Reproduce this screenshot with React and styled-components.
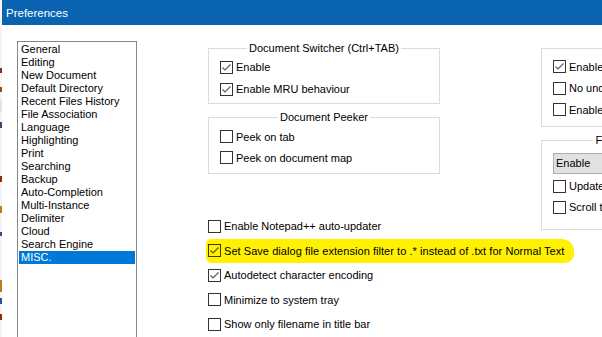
import React from "react";
import styled, { createGlobalStyle } from "styled-components";

const GlobalStyle = createGlobalStyle`
  html, body {
    margin: 0;
    padding: 0;
    background: #fff;
    overflow: hidden;
  }

  body {
    font-family: "Liberation Sans", Arial, sans-serif;
    font-size: 11px;
    color: #000;
  }
`;

const Screen = styled.div`
  display: flex;
  width: 602px;
  height: 337px;
  overflow: hidden;
`;

/* the app window behind the dialog, barely visible on the left */
const BackdropEdge = styled.div`
  flex: none;
  width: 2px;
  background: linear-gradient(
    to bottom,
    #f4f4f4 0 68px,
    #8a2a1a 68px 73px,
    #f4f4f4 73px 87px,
    #a5471c 87px 92px,
    #f4f4f4 92px 100px,
    #dfe2ee 100px 112px,
    #f4f4f4 112px 122px,
    #3a4a6a 122px 128px,
    #f4f4f4 128px 176px,
    #8a2a1a 176px 182px,
    #f4f4f4 182px 206px,
    #c27a1a 206px 213px,
    #f4f4f4 213px 232px,
    #33508a 232px 236px,
    #f4f4f4 236px 280px,
    #c27a1a 280px 292px,
    #f4f4f4 292px 298px,
    #33508a 298px 304px,
    #f4f4f4 304px 314px,
    #8a2a1a 314px 320px,
    #f4f4f4 320px
  );
`;

const Window = styled.div`
  flex: 1;
  min-width: 0;
  display: flex;
  flex-direction: column;
  overflow: hidden;
  background: #fff;
`;

const TitleBar = styled.div`
  flex: none;
  height: 25px;
  display: flex;
  align-items: center;
  padding-left: 4px;
  background: #0a63b0;
  color: #fff;
  font-size: 11.5px;
`;

const Body = styled.div`
  flex: 1;
  min-height: 0;
  display: flex;
  align-items: flex-start;
  padding: 16px 0 0 15px;
`;

const ListBox = styled.ul`
  flex: none;
  box-sizing: border-box;
  width: 120px;
  height: 320px;
  margin: 0;
  padding: 1px;
  list-style: none;
  border: 1px solid #828790;
`;

const ListItem = styled.li`
  height: 13px;
  line-height: 13px;
  padding-left: 2px;
  white-space: nowrap;
  background: ${(p) => (p.$selected ? "#0078d7" : "transparent")};
  color: ${(p) => (p.$selected ? "#fff" : "#000")};
`;

const Panel = styled.div`
  display: grid;
  grid-template-columns: 232px 236px;
  column-gap: 101px;
  align-items: start;
  margin-left: 71px;
`;

const Column = styled.div`
  display: flex;
  flex-direction: column;
  padding-top: 1px;
`;

const Group = styled.fieldset`
  margin: ${(p) => (p.$first ? "0" : "7px 0 0")};
  padding: ${(p) => p.$pad || "1px 11px 3px"};
  min-width: 0;
  border: 1px solid #dcdcdc;
`;

const Legend = styled.legend`
  margin: 0 auto;
  padding: 0 2px;
  line-height: 13px;
  white-space: nowrap;
`;

const CheckRow = styled.label`
  display: ${(p) => (p.$highlight ? "inline-flex" : "flex")};
  align-items: center;
  align-self: flex-start;
  height: ${(p) => p.$h || 22}px;
  white-space: nowrap;
  ${(p) =>
    p.$highlight &&
    `
    margin-left: -2px;
    padding: 0 10px 0 2px;
    letter-spacing: 0.05px;
    background: #fff100;
    border-radius: 5px 12px 9px 6px;
  `}
`;

const Box = styled.span`
  flex: none;
  box-sizing: border-box;
  width: 13px;
  height: 13px;
  margin-right: 3px;
  border: 1px solid ${(p) => (p.$onMark ? "#3d3b00" : "#333")};
  background: ${(p) => (p.$onMark ? "transparent" : "#fff")};
  display: flex;

  svg {
    display: block;
  }
`;

const BottomList = styled.div`
  display: flex;
  flex-direction: column;
  margin-top: 40px;
`;

const Dropdown = styled.div`
  box-sizing: border-box;
  display: flex;
  align-items: center;
  justify-content: space-between;
  width: 200px;
  height: 21px;
  padding: 0 6px 0 2px;
  margin-bottom: 2px;
  background: #e1e1e1;
  border: 1px solid #adadad;
`;

const Check = ({ checked, onMark }) => (
  <Box $onMark={onMark}>
    {checked && (
      <svg width="11" height="11" viewBox="0 0 11 11">
        <polyline
          points="1.5,5.5 4,8 9.5,2.5"
          fill="none"
          stroke={onMark ? "#5a5700" : "#5e5e5e"}
          strokeWidth="1.2"
        />
      </svg>
    )}
  </Box>
);

const Option = ({ checked, h, highlight, children }) => (
  <CheckRow $h={h} $highlight={highlight}>
    <Check checked={checked} onMark={highlight} />
    {children}
  </CheckRow>
);

const categories = [
  "General",
  "Editing",
  "New Document",
  "Default Directory",
  "Recent Files History",
  "File Association",
  "Language",
  "Highlighting",
  "Print",
  "Searching",
  "Backup",
  "Auto-Completion",
  "Multi-Instance",
  "Delimiter",
  "Cloud",
  "Search Engine",
  "MISC.",
];

const App = () => {
  return (
    <Screen>
      <GlobalStyle />
      <BackdropEdge />
      <Window>
        <TitleBar>Preferences</TitleBar>
        <Body>
          <ListBox>
            {categories.map((c) => (
              <ListItem key={c} $selected={c === "MISC."}>
                {c}
              </ListItem>
            ))}
          </ListBox>

          <Panel>
            <Column>
              <Group $first>
                <Legend>Document Switcher (Ctrl+TAB)</Legend>
                <Option checked>Enable</Option>
                <Option checked>Enable MRU behaviour</Option>
              </Group>
              <Group $pad="2px 11px 5px">
                <Legend>Document Peeker</Legend>
                <Option h={21}>Peek on tab</Option>
                <Option h={21}>Peek on document map</Option>
              </Group>

              <BottomList>
                <Option h={24.5}>Enable Notepad++ auto-updater</Option>
                <Option h={24.5} checked highlight>
                  Set Save dialog file extension filter to .* instead of .txt
                  for Normal Text
                </Option>
                <Option h={24.5} checked>
                  Autodetect character encoding
                </Option>
                <Option h={24.5}>Minimize to system tray</Option>
                <Option h={24.5}>Show only filename in title bar</Option>
              </BottomList>
            </Column>

            <Column>
              <Group $first $pad="1px 11px 5px">
                <Legend>Clickable Link Settings</Legend>
                <Option h={21.5} checked>
                  Enable
                </Option>
                <Option h={21.5}>No underline</Option>
                <Option h={21.5}>Enable fullbox mode</Option>
              </Group>
              <Group $pad="6px 11px 11px">
                <Legend>File Status Auto-Detection</Legend>
                <Dropdown>
                  <span>Enable</span>
                  <svg width="8" height="5" viewBox="0 0 8 5">
                    <polyline
                      points="0.5,0.5 4,4 7.5,0.5"
                      fill="none"
                      stroke="#333"
                    />
                  </svg>
                </Dropdown>
                <Option h={21}>Update silently</Option>
                <Option h={21}>Scroll to the last line after update</Option>
              </Group>
            </Column>
          </Panel>
        </Body>
      </Window>
    </Screen>
  );
};

export default App;
